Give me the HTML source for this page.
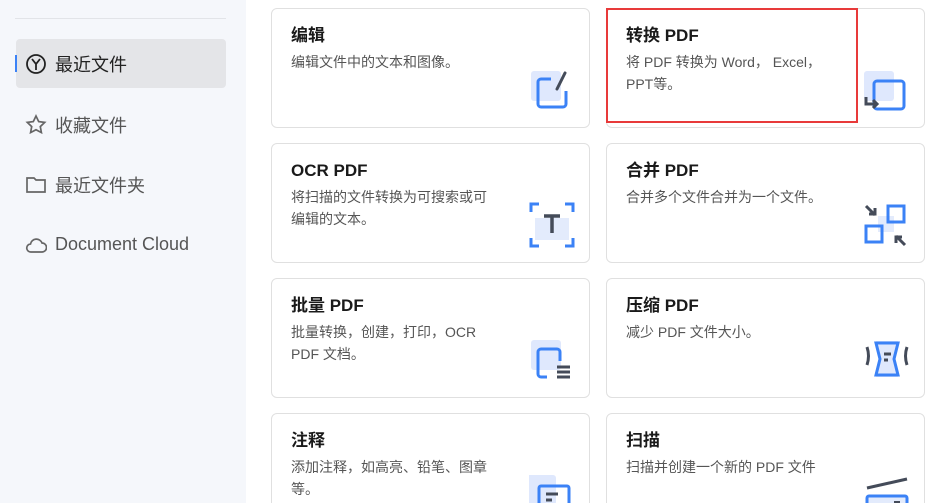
<!DOCTYPE html>
<html><head><meta charset="utf-8"><style>
*{margin:0;padding:0;box-sizing:border-box}
html,body{width:945px;height:503px;overflow:hidden}
body{background:#fff;font-family:"Liberation Sans","Noto Sans CJK SC",sans-serif;position:relative}
.side{position:absolute;left:0;top:0;width:246px;height:503px;background:#f5f7fb}
.hr{position:absolute;left:15px;top:18px;width:211px;height:1px;background:#e2e4e8}
.item{position:absolute;left:16px;width:210px;height:49px;display:flex;align-items:center;font-size:18px;color:#555}
.item svg{position:absolute;left:9px}
.item span{position:absolute;left:39px}
.sel{background:#e4e5e8;border-radius:4px;color:#222}
.bar{position:absolute;left:15px;top:55px;width:2px;height:17px;background:#3b82f6}
.card{position:absolute;width:319px;height:120px;border:1px solid #e0e0e0;border-radius:6px;background:#fff;overflow:hidden}
.card h3{position:absolute;left:19px;top:15px;font-size:17px;line-height:24px;height:24px;font-weight:bold;color:#1a1a1a;white-space:nowrap}
.card p{position:absolute;left:19px;top:42px;width:201px;font-size:14px;line-height:22px;color:#555}
.card svg{position:absolute;left:257px;top:58px}
.red{position:absolute;left:606px;top:8px;width:252px;height:115px;border:2px solid #e83a3a}
</style></head><body>
<div class="side">
<div class="hr"></div>
<div class="item sel" style="top:39px"><svg width="22" height="22" viewBox="0 0 22 22"><circle cx="11" cy="11" r="9" fill="none" stroke="#222" stroke-width="1.8"/><path d="M7 6l4 5 4-5M11 11v6" fill="none" stroke="#222" stroke-width="1.8"/></svg><span>最近文件</span></div>
<div class="bar"></div>
<div class="item" style="top:100px"><svg width="22" height="22" viewBox="0 0 22 22"><path d="M11 2l2.7 5.6 6 .8-4.4 4.2 1.1 6L11 15.7 5.6 18.6l1.1-6L2.3 8.4l6-.8z" fill="none" stroke="#666" stroke-width="1.7"/></svg><span>收藏文件</span></div>
<div class="item" style="top:160px"><svg width="22" height="22" viewBox="0 0 22 22"><path d="M2 4h7l2 2h9v12H2z" fill="none" stroke="#666" stroke-width="1.7"/></svg><span>最近文件夹</span></div>
<div class="item" style="top:220px"><svg width="22" height="22" viewBox="0 0 22 22"><path d="M6 18a4 4 0 0 1-.5-8A6 6 0 0 1 17 9a4.5 4.5 0 0 1 0 9z" fill="none" stroke="#666" stroke-width="1.7"/></svg><span>Document Cloud</span></div>
</div>

<div class="card" style="left:271px;top:8px"><h3>编辑</h3><p>编辑文件中的文本和图像。</p>
<svg width="46" height="46" viewBox="0 0 46 46"><rect x="2" y="4" width="30" height="30" rx="3" fill="#dfe8fd"/><path d="M22 12h-10a3 3 0 0 0-3 3v22a3 3 0 0 0 3 3h22a3 3 0 0 0 3-3V24" fill="none" stroke="#3b82f6" stroke-width="3"/><path d="M28 22l8-16" stroke="#444b59" stroke-width="3" stroke-linecap="round"/></svg></div>
<div class="card" style="left:606px;top:8px"><h3>转换 PDF</h3><p style="width:215px">将 PDF 转换为 Word， Excel，PPT等。</p>
<svg width="46" height="46" viewBox="0 0 46 46"><rect x="0" y="4" width="30" height="30" rx="3" fill="#dfe8fd"/><rect x="10" y="14" width="30" height="28" rx="3" fill="none" stroke="#3b82f6" stroke-width="3"/><path d="M2 30v7h10M9 33l4 4-4 4" fill="none" stroke="#444b59" stroke-width="3"/></svg></div>
<div class="red"></div>

<div class="card" style="left:271px;top:143px"><h3>OCR PDF</h3><p>将扫描的文件转换为可搜索或可编辑的文本。</p>
<svg width="46" height="46" viewBox="0 0 46 46"><rect x="6" y="16" width="34" height="22" fill="#e3ebfc"/><path d="M2 10V2h8M36 2h8v8M44 36v8h-8M10 44H2v-8" fill="none" stroke="#3b82f6" stroke-width="3"/><path d="M15 14h16M23 14v17" stroke="#444b59" stroke-width="3.5"/></svg></div>
<div class="card" style="left:606px;top:143px"><h3>合并 PDF</h3><p style="width:230px">合并多个文件合并为一个文件。</p>
<svg width="46" height="46" viewBox="0 0 46 46"><rect x="14" y="14" width="16" height="16" fill="#e3ebfc"/><rect x="24" y="4" width="16" height="16" fill="none" stroke="#3b82f6" stroke-width="3"/><rect x="2" y="24" width="16" height="16" fill="none" stroke="#3b82f6" stroke-width="3"/><path d="M2 4l9 9M5 12h6V6M41 43l-9-9M38 35h-6v6" fill="none" stroke="#444b59" stroke-width="3"/></svg></div>

<div class="card" style="left:271px;top:278px"><h3>批量 PDF</h3><p>批量转换，创建，打印，OCR PDF 文档。</p>
<svg width="46" height="46" viewBox="0 0 46 46"><rect x="2" y="3" width="30" height="30" rx="3" fill="#dfe8fd"/><path d="M18 40h-6a3 3 0 0 1-3-3V15a3 3 0 0 1 3-3h16a3 3 0 0 1 3 3v9" fill="none" stroke="#3b82f6" stroke-width="3"/><path d="M28 30h13M28 35h13M28 40h13" stroke="#444b59" stroke-width="3"/></svg></div>
<div class="card" style="left:606px;top:278px"><h3>压缩 PDF</h3><p>减少 PDF 文件大小。</p>
<svg width="46" height="46" viewBox="0 0 46 46"><path d="M12 4h22l-4 18 4 18H12l4-18z" fill="#dfe8fd"/><path d="M12 6h22l-4 16 4 16H12l4-16z" fill="none" stroke="#3b82f6" stroke-width="3"/><path d="M3 10q3 9 0 18M43 10q-3 9 0 18M20 17h7M20 23h4" fill="none" stroke="#444b59" stroke-width="3"/></svg></div>

<div class="card" style="left:271px;top:413px"><h3>注释</h3><p>添加注释，如高亮、铅笔、图章等。</p>
<svg width="46" height="46" viewBox="0 0 46 46"><rect x="-3" y="3" width="30" height="30" rx="3" fill="#dfe8fd"/><rect x="10" y="14" width="30" height="30" rx="2" fill="none" stroke="#3b82f6" stroke-width="3"/><path d="M17 22h12M17 28h6" stroke="#444b59" stroke-width="3"/></svg></div>
<div class="card" style="left:606px;top:413px"><h3>扫描</h3><p style="width:230px">扫描并创建一个新的 PDF 文件</p>
<svg width="46" height="46" viewBox="0 0 46 46"><path d="M3 16l40-9" stroke="#444b59" stroke-width="3"/><rect x="3" y="24" width="40" height="12" rx="2" fill="#e3ebfc" stroke="#3b82f6" stroke-width="3"/><path d="M30 30h6" stroke="#444b59" stroke-width="2"/></svg></div>
</body></html>
